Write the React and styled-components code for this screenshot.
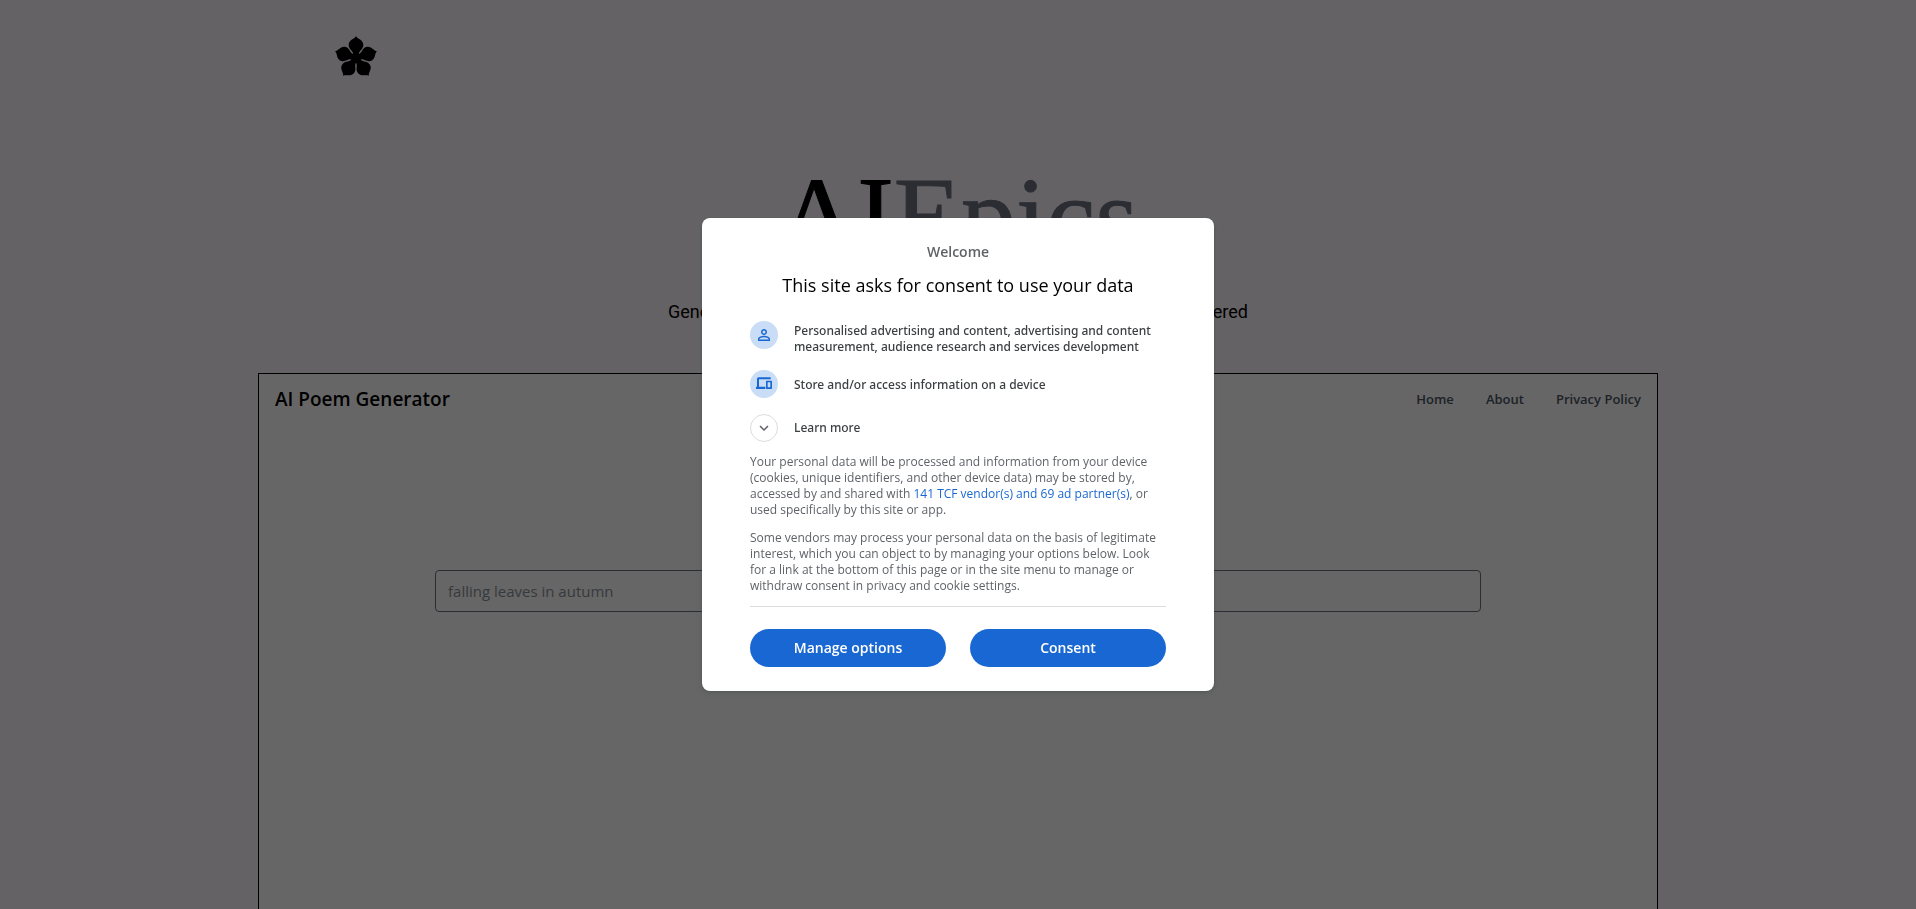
import React from "react";
import styled, { createGlobalStyle } from "styled-components";

const sans = `"Open Sans", "Noto Sans", sans-serif`;
const wideSans = `"Noto Sans", "Open Sans", sans-serif`;

const GlobalStyle = createGlobalStyle`
  *, *::before, *::after { box-sizing: border-box; }
  body {
    margin: 0;
    background: #fcf6fd;
    color: #000;
    font-family: ${sans};
    overflow: hidden;
  }
  h1, h2, h3, p, ul { margin: 0; padding: 0; }
  a { text-decoration: none; }
`;

const Page = styled.div`
  min-height: 100vh;
  display: flex;
  flex-direction: column;
`;

const TopBar = styled.header`
  width: 100%;
  max-width: 1280px;
  margin: 0 auto;
  padding: 36px 16px 32px;
`;

const LogoLink = styled.a`
  display: block;
  width: 44px;
  height: 44px;
  color: #000;
`;

const Hero = styled.section`
  display: flex;
  flex-direction: column;
  align-items: center;
  padding: 44px 16px 47px;
  text-align: center;
`;

const Title = styled.h1`
  font-family: "Liberation Serif", serif;
  font-weight: 400;
  font-size: 110px;
  line-height: 120px;
  -webkit-text-stroke: 1px currentColor;
`;

const TitleAccent = styled.span`
  color: #6b7280;
`;

const Tagline = styled.p`
  margin-top: 22px;
  font-family: Roboto, sans-serif;
  font-size: 18px;
  line-height: 28px;
`;

const Panel = styled.main`
  flex: 1;
  width: 100%;
  max-width: 1400px;
  min-height: 560px;
  margin: 0 auto;
  background: #fff;
  border: 1px solid #000;
  border-bottom: 0;
`;

const PanelHeader = styled.div`
  display: flex;
  justify-content: space-between;
  align-items: center;
  padding: 9px 16px;
`;

const PanelTitle = styled.h2`
  font-size: 19px;
  line-height: 32px;
  font-weight: 600;
`;

const Nav = styled.nav`
  display: flex;
  gap: 32px;
`;

const NavLink = styled.a`
  color: #4b5563;
  font-size: 13px;
  line-height: 28px;
  font-weight: 600;
`;

const Prompt = styled.form`
  max-width: 1046px;
  margin: 146px auto 0;
`;

const PromptInput = styled.input`
  display: block;
  width: 100%;
  height: 42px;
  padding: 8px 12px;
  border: 1px solid #6b7280;
  border-radius: 4px;
  background: #fff;
  font-family: ${sans};
  font-size: 15px;
  &::placeholder { color: #8b9198; opacity: 1; }
`;

const Overlay = styled.div`
  position: fixed;
  inset: 0;
  display: flex;
  align-items: center;
  justify-content: center;
  background: rgba(0, 0, 0, 0.6);
`;

const Dialog = styled.section`
  width: 512px;
  max-width: 90%;
  padding: 24px 48px;
  border-radius: 8px;
  background: #fff;
  box-shadow: 0 1px 2px rgba(60, 64, 67, 0.3), 0 2px 6px 2px rgba(60, 64, 67, 0.15);
`;

const Welcome = styled.p`
  color: #5f6368;
  font-size: 14px;
  line-height: 20px;
  font-weight: 600;
  text-align: center;
`;

const DialogTitle = styled.h2`
  margin-top: 11px;
  font-size: 18px;
  line-height: 24px;
  font-weight: 500;
  text-align: center;
`;

const Purposes = styled.ul`
  display: flex;
  flex-direction: column;
  gap: 15px;
  margin-top: 24px;
  list-style: none;
`;

const Purpose = styled.li`
  display: flex;
  gap: 16px;
  align-items: ${(p) => (p.$center ? "center" : "flex-start")};
  color: #3c4043;
  font-family: ${wideSans};
  font-size: 12px;
  line-height: 16px;
  font-weight: 500;
`;

const PurposeText = styled.span`
  padding-top: 2px;
`;

const Badge = styled.span`
  flex: none;
  display: flex;
  align-items: center;
  justify-content: center;
  width: 28px;
  height: 28px;
  border-radius: 50%;
  background: #c9ddf6;
  color: #1967d2;
`;

const LearnMore = styled.button`
  display: flex;
  align-items: center;
  gap: 16px;
  margin-top: 16px;
  padding: 0;
  border: 0;
  background: none;
  color: #3c4043;
  font-family: ${wideSans};
  font-size: 12px;
  line-height: 16px;
  font-weight: 500;
`;

const Chevron = styled(Badge)`
  background: #fff;
  border: 1px solid #dadce0;
  color: #5f6368;
`;

const Disclosure = styled.p`
  margin-top: 12px;
  color: #5f6368;
  font-size: 12px;
  line-height: 16px;
`;

const VendorLink = styled.a`
  color: #1967d2;
`;

const Actions = styled.div`
  display: flex;
  gap: 24px;
  margin-top: 12px;
  padding-top: 22px;
  border-top: 1px solid #dadce0;
`;

const ActionButton = styled.button`
  flex: 1;
  height: 38px;
  border: 0;
  border-radius: 19px;
  background: #1967d2;
  color: #fff;
  font-family: ${sans};
  font-size: 14px;
  line-height: 20px;
  font-weight: 600;
`;

function FlowerLogo() {
  return (
    <svg width="44" height="44" viewBox="-22 -22 44 44" fill="currentColor" aria-hidden="true">
      {[0, 72, 144, 216, 288].map((angle) => (
        <path
          key={angle}
          transform={`rotate(${angle})`}
          d="M0 -22C1 -19 7.500 -18.500 7.300 -13C7.200 -9 4 -8 3 -5L2 0H-2L-3 -5C-4 -8 -7.200 -9 -7.300 -13C-7.500 -18.500 -1 -19 0 -22Z"
        />
      ))}
      <circle r="5" />
    </svg>
  );
}

function PersonIcon() {
  return (
    <svg width="18" height="18" viewBox="0 0 24 24" fill="currentColor" aria-hidden="true">
      <path d="M12 5.900a2.100 2.100 0 1 1 0 4.200 2.100 2.100 0 0 1 0-4.200m0 9c2.970 0 6.100 1.460 6.100 2.100v1.100H5.900V17c0-.64 3.130-2.100 6.100-2.100M12 4C9.790 4 8 5.790 8 8s1.790 4 4 4 4-1.790 4-4-1.790-4-4-4zm0 9c-2.670 0-8 1.340-8 4v3h16v-3c0-2.660-5.330-4-8-4z" />
    </svg>
  );
}

function DevicesIcon() {
  return (
    <svg width="16" height="16" viewBox="0 0 24 24" fill="currentColor" aria-hidden="true">
      <path d="M4.500 5H22V2H4C2.600 2 1.500 3.100 1.500 4.500V16H0v3.500h14V16H4.500V5zM23 7h-7c-.55 0-1 .45-1 1v10.500c0 .55.450 1 1 1h7c.55 0 1-.45 1-1V8c0-.55-.45-1-1-1zm-1.500 10h-4V9.500h4V17z" />
    </svg>
  );
}

function ChevronIcon() {
  return (
    <svg width="18" height="18" viewBox="0 0 24 24" fill="currentColor" aria-hidden="true">
      <path d="M7.410 8.590 12 13.170l4.590-4.580L18 10l-6 6-6-6 1.410-1.410z" />
    </svg>
  );
}

export default function App() {
  return (
    <>
      <GlobalStyle />
      <Page>
        <TopBar>
          <LogoLink href="#" aria-label="AI Epics">
            <FlowerLogo />
          </LogoLink>
        </TopBar>
        <Hero>
          <Title>
            AI<TitleAccent>Epics</TitleAccent>
          </Title>
          <Tagline>Generate beautiful, creative and original poems in seconds — AI powered</Tagline>
        </Hero>
        <Panel>
          <PanelHeader>
            <PanelTitle>AI Poem Generator</PanelTitle>
            <Nav>
              <NavLink href="#">Home</NavLink>
              <NavLink href="#">About</NavLink>
              <NavLink href="#">Privacy Policy</NavLink>
            </Nav>
          </PanelHeader>
          <Prompt>
            <PromptInput type="text" aria-label="Poem topic" placeholder="falling leaves in autumn" />
          </Prompt>
        </Panel>
      </Page>
      <Overlay>
        <Dialog role="dialog" aria-modal="true" aria-labelledby="consent-title">
          <Welcome>Welcome</Welcome>
          <DialogTitle id="consent-title">This site asks for consent to use your data</DialogTitle>
          <Purposes>
            <Purpose>
              <Badge><PersonIcon /></Badge>
              <PurposeText>
                Personalised advertising and content, advertising and content measurement, audience
                research and services development
              </PurposeText>
            </Purpose>
            <Purpose $center>
              <Badge><DevicesIcon /></Badge>
              <PurposeText>Store and/or access information on a device</PurposeText>
            </Purpose>
          </Purposes>
          <LearnMore type="button" aria-expanded="false">
            <Chevron><ChevronIcon /></Chevron>
            Learn more
          </LearnMore>
          <Disclosure>
            Your personal data will be processed and information from your device (cookies, unique
            identifiers, and other device data) may be stored by, accessed by and shared with{" "}
            <VendorLink href="#">141 TCF vendor(s) and 69 ad partner(s)</VendorLink>, or used
            specifically by this site or app.
          </Disclosure>
          <Disclosure>
            Some vendors may process your personal data on the basis of legitimate interest, which
            you can object to by managing your options below. Look for a link at the bottom of this
            page or in the site menu to manage or withdraw consent in privacy and cookie settings.
          </Disclosure>
          <Actions>
            <ActionButton type="button">Manage options</ActionButton>
            <ActionButton type="button">Consent</ActionButton>
          </Actions>
        </Dialog>
      </Overlay>
    </>
  );
}
